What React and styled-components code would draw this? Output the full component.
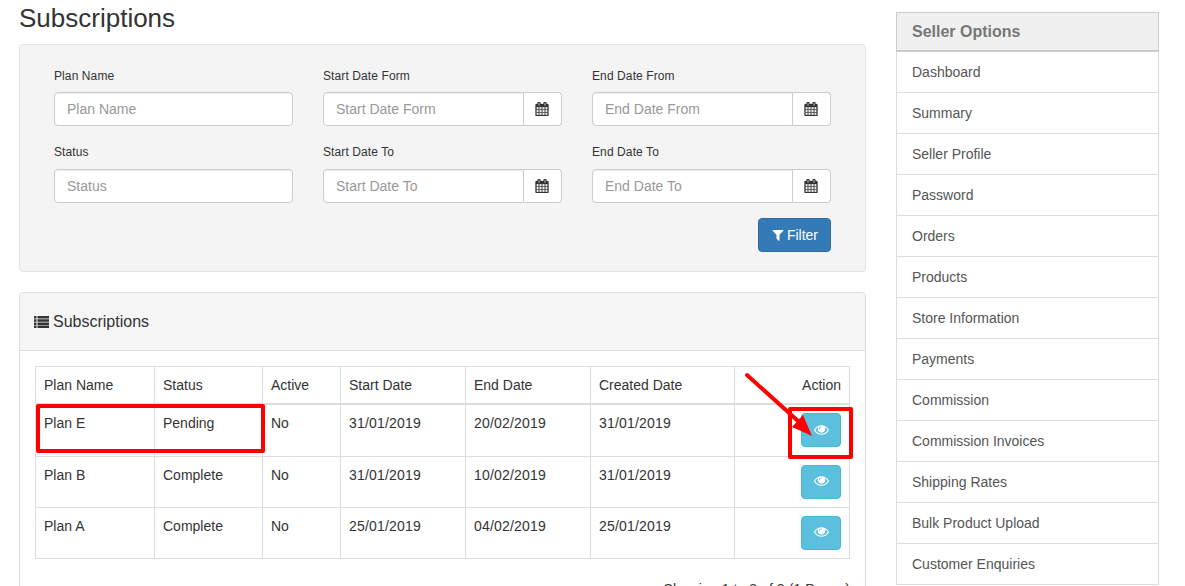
import React from 'react';
import styled, { createGlobalStyle } from 'styled-components';

const GlobalStyle = createGlobalStyle`
  html, body {
    margin: 0;
    height: 586px;
    overflow: hidden;
    background: #fff;
  }
  * {
    box-sizing: border-box;
  }
  body {
    font-family: "Liberation Sans", Arial, sans-serif;
    font-size: 14px;
    color: #333;
  }
`;

const Page = styled.div`
  position: relative;
  display: flex;
  align-items: flex-start;
  gap: 30px;
  width: 1185px;
  height: 586px;
  padding: 0 26px 0 19px;
  overflow: hidden;
`;

const Main = styled.main`
  width: 847px;
  flex: none;
`;

const Title = styled.h1`
  margin: 4px 0 12px;
  height: 28px;
  font-size: 26px;
  line-height: 28px;
  font-weight: 400;
  color: #333;
`;

const FilterPanel = styled.form`
  margin-bottom: 20px;
  padding: 20px 34px 19px 34px;
  height: 228px;
  background: #f4f4f4;
  border: 1px solid #e3e3e3;
  border-radius: 4px;
`;

const FieldGrid = styled.div`
  display: grid;
  grid-template-columns: repeat(3, 239px);
  column-gap: 30px;
  row-gap: 15px;
`;

const Field = styled.div`
  display: flex;
  flex-direction: column;
`;

const Label = styled.label`
  height: 17px;
  margin: 3px 0 ${p => (p.$lower ? '8px' : '7px')};
  font-size: 12px;
  line-height: 17px;
  letter-spacing: 0.1px;
  color: #333;
`;

const InputWrap = styled.div`
  display: flex;
  height: 34px;
`;

const Input = styled.input`
  flex: 1;
  min-width: 0;
  height: 34px;
  padding: 6px 12px;
  font: inherit;
  color: #555;
  background: #fff;
  border: 1px solid #ccc;
  border-radius: ${p => (p.$joined ? '4px 0 0 4px' : '4px')};
  box-shadow: inset 0 1px 1px rgba(0, 0, 0, 0.075);
  outline: none;

  &::placeholder {
    color: #999;
    opacity: 1;
  }
`;

const Addon = styled.span`
  display: flex;
  align-items: center;
  justify-content: center;
  flex: none;
  width: 38px;
  padding-right: 2px;
  color: #333;
  background: #fff;
  border: 1px solid #ccc;
  border-left: none;
  border-radius: 0 4px 4px 0;
`;

const FilterRow = styled.div`
  display: flex;
  justify-content: flex-end;
  margin-top: 15px;
`;

const FilterButton = styled.button`
  display: inline-flex;
  align-items: center;
  gap: 2px;
  height: 34px;
  padding: 0 12px;
  font: inherit;
  color: #fff;
  background: #337ab7;
  border: 1px solid #2e6da4;
  border-radius: 4px;
`;

const ListPanel = styled.section`
  height: 400px;
  background: #fff;
  border: 1px solid #ddd;
  border-radius: 4px;
`;

const ListHeading = styled.div`
  display: flex;
  align-items: center;
  gap: 4px;
  height: 58px;
  padding: 0 14px;
  font-size: 16px;
  color: #333;
  background: #f5f5f5;
  border-bottom: 1px solid #ddd;
  border-radius: 3px 3px 0 0;
`;

const ListBody = styled.div`
  padding: 15px;
`;

const Table = styled.table`
  width: 814px;
  table-layout: fixed;
  border-collapse: collapse;
  line-height: 20px;
`;

const HeadCell = styled.th`
  height: 37px;
  padding: 8px;
  font-weight: 400;
  text-align: ${p => (p.$right ? 'right' : 'left')};
  border: 1px solid #ddd;
  border-bottom: 2px solid #ddd;
`;

const Cell = styled.td`
  height: ${p => (p.$tall ? '52px' : '51px')};
  padding: 8px;
  vertical-align: top;
  text-align: ${p => (p.$right ? 'right' : 'left')};
  letter-spacing: ${p => (p.$date ? '0.2px' : '0')};
  border: 1px solid #ddd;
`;

const ViewButton = styled.button`
  display: inline-flex;
  align-items: center;
  justify-content: center;
  vertical-align: top;
  width: 40px;
  height: 34px;
  padding: 0 0 2px;
  color: #fff;
  background: #5bc0de;
  border: 1px solid #46b8da;
  border-radius: 4px;
`;

const Paging = styled.div`
  margin-top: 20px;
  line-height: 20px;
  letter-spacing: 0.07px;
  text-align: right;
`;

const Sidebar = styled.aside`
  width: 263px;
  flex: none;
  margin-top: 12px;
`;

const SidebarTitle = styled.div`
  height: 40px;
  padding: 0 15px;
  font-size: 16px;
  font-weight: 700;
  line-height: 38px;
  color: #777;
  background: #f0f0f0;
  border: 1px solid #ccc;
  border-bottom-width: 2px;
`;

const SidebarItem = styled.a`
  display: block;
  height: 41px;
  padding: 0 15px;
  line-height: 40px;
  color: #555;
  border: 1px solid #ddd;
  border-top: none;
`;

const Highlight = styled.div`
  position: absolute;
  left: ${p => p.$left}px;
  top: ${p => p.$top}px;
  width: ${p => p.$width}px;
  height: ${p => p.$height}px;
  border: 4px solid #f00;
  border-radius: 2px;
  pointer-events: none;
`;

const ArrowMark = styled.svg`
  position: absolute;
  left: 740px;
  top: 368px;
  pointer-events: none;
`;

const CalendarIcon = () => (
  <svg width="14" height="14" viewBox="0 0 1792 1792" aria-hidden="true">
    <path
      fill="currentColor"
      stroke="currentColor"
      strokeWidth="40"
      d="M192 1664h288v-288h-288v288zm352 0h320v-288h-320v288zm-352-352h288v-320h-288v320zm352 0h320v-320h-320v320zm-352-384h288v-288h-288v288zm736 736h320v-288h-320v288zm-384-736h320v-288h-320v288zm768 736h288v-288h-288v288zm-384-352h320v-320h-320v320zm-352-864v-288q0-13-9.500-22.500t-22.500-9.500h-64q-13 0-22.500 9.500t-9.500 22.500v288q0 13 9.500 22.500t22.500 9.500h64q13 0 22.500-9.500t9.500-22.500zm736 864h288v-320h-288v320zm-384-384h320v-288h-320v288zm384 0h288v-288h-288v288zm32-480v-288q0-13-9.500-22.500t-22.500-9.500h-64q-13 0-22.500 9.500t-9.500 22.500v288q0 13 9.500 22.500t22.500 9.500h64q13 0 22.500-9.500t9.500-22.500zm384-64v1280q0 52-38 90t-90 38h-1408q-52 0-90-38t-38-90v-1280q0-52 38-90t90-38h128v-96q0-66 47-113t113-47h64q66 0 113 47t47 113v96h384v-96q0-66 47-113t113-47h64q66 0 113 47t47 113v96h128q52 0 90 38t38 90z"
    />
  </svg>
);

const FunnelIcon = () => (
  <svg width="14" height="14" viewBox="0 0 1792 1792" aria-hidden="true">
    <path
      fill="currentColor"
      d="M1595 295q17 41-14 70l-493 493v742q0 42-39 59-13 5-25 5-27 0-45-19l-256-256q-19-19-19-45v-486l-493-493q-31-29-14-70 17-39 59-39h1280q42 0 59 39z"
    />
  </svg>
);

const ListIcon = () => (
  <svg width="15" height="12" viewBox="0 0 15 12" aria-hidden="true">
    <path d="M0 0h2.500v2.500H0zM3.500 0H15v2.500H3.500zM0 3.200h2.500v2.500H0zM3.500 3.200H15v2.500H3.500zM0 6.400h2.500v2.500H0zM3.500 6.400H15v2.500H3.500zM0 9.500h2.500V12H0zM3.500 9.500H15V12H3.500z" fill="#333" />
  </svg>
);

const EyeIcon = () => (
  <svg width="15" height="15" viewBox="0 0 1792 1792" aria-hidden="true">
    <path
      fill="currentColor"
      d="M1664 960q-152-236-381-353 61 104 61 225 0 185-131.500 316.500t-316.500 131.500-316.500-131.500-131.500-316.500q0-121 61-225-229 117-381 353 133 205 333.500 326.500t434.500 121.500 434.500-121.500 333.500-326.500zm-720-384q0-20-14-34t-34-14q-125 0-214.500 89.500t-89.500 214.500q0 20 14 34t34 14 34-14 14-34q0-86 61-147t147-61q20 0 34-14t14-34zm848 384q0 34-20 69-140 230-376.500 368.500t-499.500 138.500-499.500-139-376.500-368q-20-35-20-69t20-69q140-229 376.500-368t499.500-139 499.500 139 376.500 368q20 35 20 69z"
    />
  </svg>
);

const fields = [
  { label: 'Plan Name' },
  { label: 'Start Date Form', date: true },
  { label: 'End Date From', date: true },
  { label: 'Status', lower: true },
  { label: 'Start Date To', date: true, lower: true },
  { label: 'End Date To', date: true, lower: true },
];

const plans = [
  ['Plan E', 'Pending', 'No', '31/01/2019', '20/02/2019', '31/01/2019'],
  ['Plan B', 'Complete', 'No', '31/01/2019', '10/02/2019', '31/01/2019'],
  ['Plan A', 'Complete', 'No', '25/01/2019', '04/02/2019', '25/01/2019'],
];

const columns = [
  { title: 'Plan Name', width: 119 },
  { title: 'Status', width: 108 },
  { title: 'Active', width: 78 },
  { title: 'Start Date', width: 125 },
  { title: 'End Date', width: 125 },
  { title: 'Created Date', width: 144 },
];

const sellerOptions = [
  'Dashboard',
  'Summary',
  'Seller Profile',
  'Password',
  'Orders',
  'Products',
  'Store Information',
  'Payments',
  'Commission',
  'Commission Invoices',
  'Shipping Rates',
  'Bulk Product Upload',
  'Customer Enquiries',
];

function App() {
  return (
    <Page>
      <GlobalStyle />
      <Main>
        <Title>Subscriptions</Title>
        <FilterPanel onSubmit={e => e.preventDefault()}>
          <FieldGrid>
            {fields.map(field => (
              <Field key={field.label}>
                <Label $lower={field.lower}>{field.label}</Label>
                <InputWrap>
                  <Input placeholder={field.label} $joined={field.date} />
                  {field.date && (
                    <Addon>
                      <CalendarIcon />
                    </Addon>
                  )}
                </InputWrap>
              </Field>
            ))}
          </FieldGrid>
          <FilterRow>
            <FilterButton type="submit">
              <FunnelIcon />
              Filter
            </FilterButton>
          </FilterRow>
        </FilterPanel>
        <ListPanel>
          <ListHeading>
            <ListIcon />
            Subscriptions
          </ListHeading>
          <ListBody>
            <Table>
              <colgroup>
                {columns.map(col => (
                  <col key={col.title} width={col.width} />
                ))}
                <col width={115} />
              </colgroup>
              <thead>
                <tr>
                  {columns.map(col => (
                    <HeadCell key={col.title}>{col.title}</HeadCell>
                  ))}
                  <HeadCell $right>Action</HeadCell>
                </tr>
              </thead>
              <tbody>
                {plans.map((plan, rowIndex) => (
                  <tr key={plan[0]}>
                    {plan.map((value, i) => (
                      <Cell key={i} $tall={rowIndex === 0} $date={i >= 3}>
                        {value}
                      </Cell>
                    ))}
                    <Cell $right $tall={rowIndex === 0}>
                      <ViewButton type="button">
                        <EyeIcon />
                      </ViewButton>
                    </Cell>
                  </tr>
                ))}
              </tbody>
            </Table>
            <Paging>Showing 1 to 3 of 3 (1 Pages)</Paging>
          </ListBody>
        </ListPanel>
      </Main>
      <Sidebar>
        <SidebarTitle>Seller Options</SidebarTitle>
        {sellerOptions.map(item => (
          <SidebarItem key={item}>{item}</SidebarItem>
        ))}
      </Sidebar>
      <Highlight $left={36} $top={404} $width={229} $height={49} />
      <Highlight $left={788} $top={407} $width={65} $height={52} />
      <ArrowMark width="80" height="80" viewBox="0 0 80 80" aria-hidden="true">
        <path d="M7 7L58 53" stroke="#f00" strokeWidth="4" strokeLinecap="round" />
        <path d="M72 68L52 59L63 47z" fill="#f00" />
      </ArrowMark>
    </Page>
  );
}

export default App;
